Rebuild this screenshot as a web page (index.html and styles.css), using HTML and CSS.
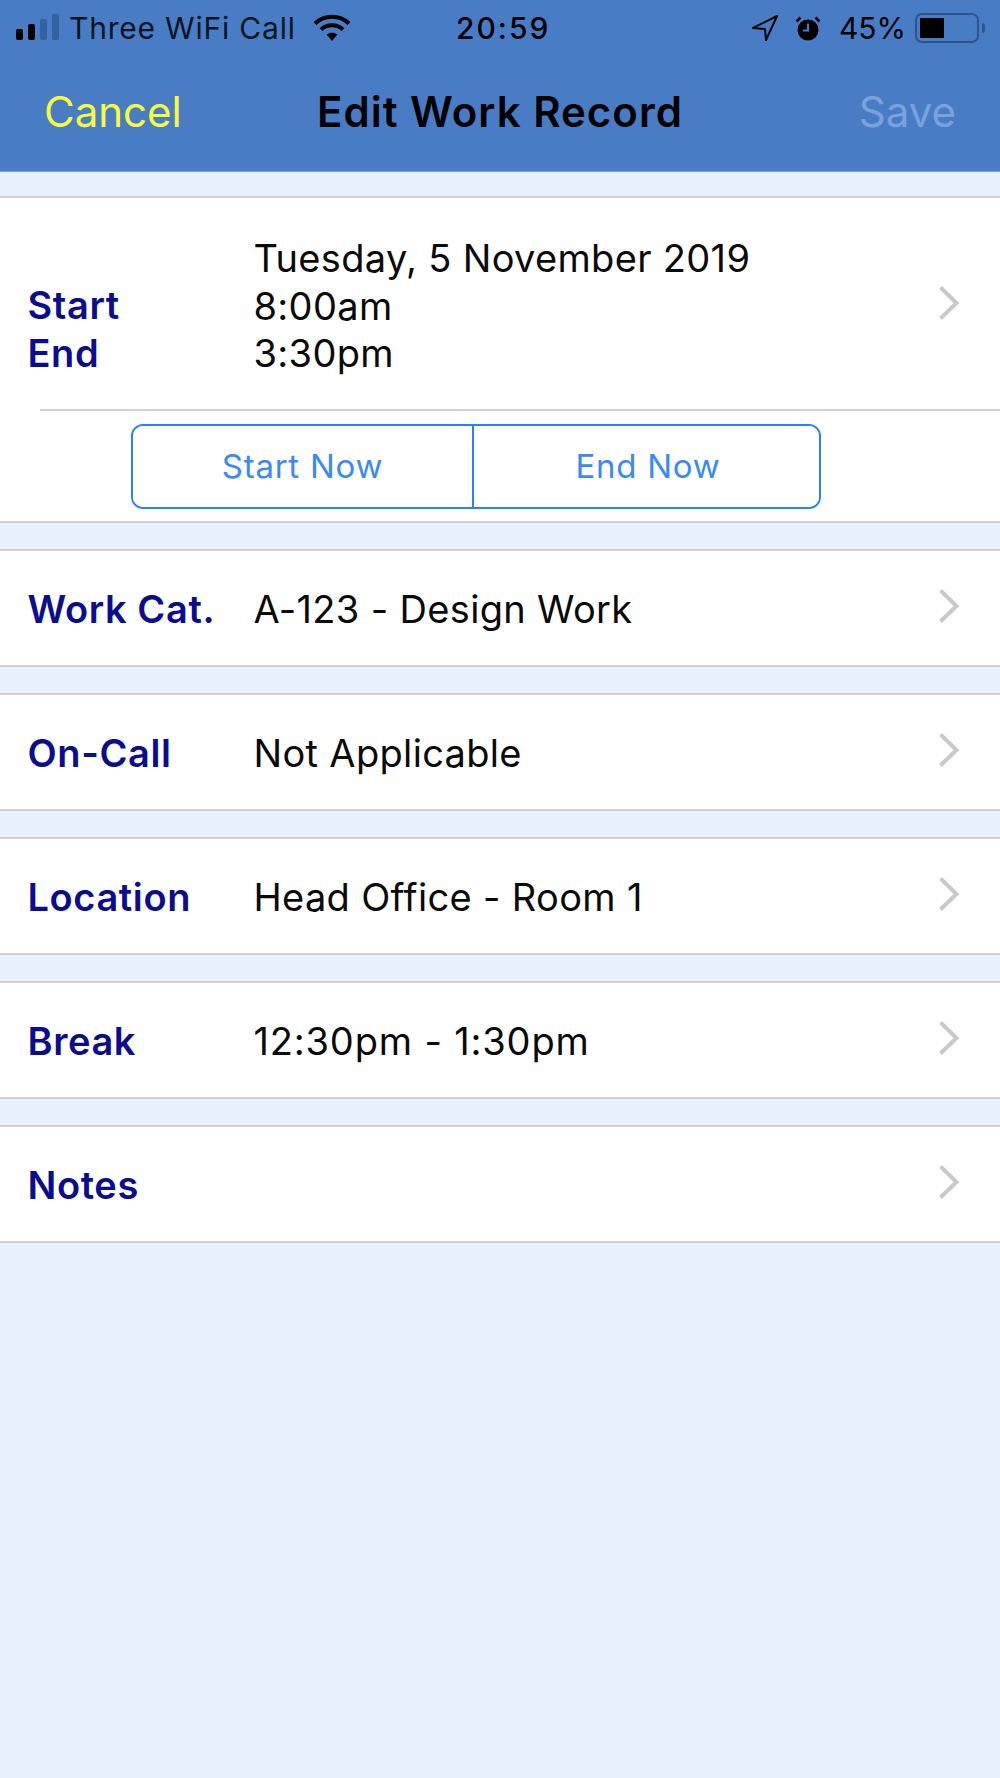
FILE: index.html
```html
<!DOCTYPE html>
<html lang="en">
<head>
<meta charset="utf-8">
<title>Edit Work Record</title>
<link rel="stylesheet" href="styles.css">
</head>
<body>
<header class="topbar">
  <div class="status">
    <div class="status-left">
      <svg class="signal" width="46" height="28" viewBox="0 0 46 28"><rect x="0" y="15" width="7" height="11" rx="2" fill="#000"/><rect x="12" y="10" width="7" height="16" rx="2" fill="#000"/><rect x="24" y="5" width="7" height="21" rx="2" fill="#34619f"/><rect x="36" y="0" width="7" height="26" rx="2" fill="#34619f"/></svg>
      <span class="carrier">Three WiFi Call</span>
      <svg class="wifi" width="38" height="28" viewBox="0 0 38 28"><path d="M19 27 13.600 20.600C16.900 18 21.100 18 24.400 20.600Z" fill="#000"/><path d="M2 9.500C11.500 .5 26.500 .5 36 9.500" fill="none" stroke="#000" stroke-width="4"/><path d="M8 15.500C14 9.800 24 9.800 30 15.500" fill="none" stroke="#000" stroke-width="4"/></svg>
    </div>
    <div class="clock">20:59</div>
    <div class="status-right">
      <svg class="loc" width="26" height="26" viewBox="0 0 26 26"><path d="M25 1 1 13 13 14 14 25Z" fill="none" stroke="#000" stroke-width="2" stroke-linejoin="round"/></svg>
      <svg class="alarm" width="26" height="25" viewBox="0 0 26 25"><circle cx="13" cy="14" r="10.500" fill="#000"/><path d="M13 7.500v7H8" fill="none" stroke="#487dc6" stroke-width="2.200"/><path d="M1.500 5.500 5.500 1.500M24.500 5.500 20.500 1.500" stroke="#000" stroke-width="2.500"/></svg>
      <span class="pct">45%</span>
      <div class="battery"><div class="battery-fill"></div></div>
      <div class="battery-tip"></div>
    </div>
  </div>
  <nav class="navbar">
    <span class="cancel">Cancel</span>
    <span class="title">Edit Work Record</span>
    <span class="save">Save</span>
  </nav>
</header>

<main class="form">
  <section class="group">
    <div class="row row-time">
      <div class="labels"><div class="label">Start</div><div class="label">End</div></div>
      <div class="values"><div>Tuesday, 5 November 2019</div><div>8:00am</div><div>3:30pm</div></div>
      <svg class="chev" width="22" height="36" viewBox="0 0 22 36"><path d="M2.500 2.500 18.500 18 2.500 33.500" fill="none" stroke="#c8c8cd" stroke-width="4"/></svg>
    </div>
    <div class="buttons-row">
      <div class="segment">
        <button class="seg-btn seg-start">Start Now</button>
        <button class="seg-btn seg-end">End Now</button>
      </div>
    </div>
  </section>

  <section class="group">
    <div class="row"><div class="label">Work Cat.</div><div class="value">A-123 - Design Work</div>
      <svg class="chev" width="22" height="36" viewBox="0 0 22 36"><path d="M2.500 2.500 18.500 18 2.500 33.500" fill="none" stroke="#c8c8cd" stroke-width="4"/></svg></div>
  </section>
  <section class="group">
    <div class="row"><div class="label">On-Call</div><div class="value">Not Applicable</div>
      <svg class="chev" width="22" height="36" viewBox="0 0 22 36"><path d="M2.500 2.500 18.500 18 2.500 33.500" fill="none" stroke="#c8c8cd" stroke-width="4"/></svg></div>
  </section>
  <section class="group">
    <div class="row"><div class="label">Location</div><div class="value">Head Office - Room 1</div>
      <svg class="chev" width="22" height="36" viewBox="0 0 22 36"><path d="M2.500 2.500 18.500 18 2.500 33.500" fill="none" stroke="#c8c8cd" stroke-width="4"/></svg></div>
  </section>
  <section class="group">
    <div class="row"><div class="label">Break</div><div class="value value-time">12:30pm - 1:30pm</div>
      <svg class="chev" width="22" height="36" viewBox="0 0 22 36"><path d="M2.500 2.500 18.500 18 2.500 33.500" fill="none" stroke="#c8c8cd" stroke-width="4"/></svg></div>
  </section>
  <section class="group">
    <div class="row"><div class="label">Notes</div><div class="value"></div>
      <svg class="chev" width="22" height="36" viewBox="0 0 22 36"><path d="M2.500 2.500 18.500 18 2.500 33.500" fill="none" stroke="#c8c8cd" stroke-width="4"/></svg></div>
  </section>
</main>
</body>
</html>
```

FILE: styles.css
```css
* { box-sizing: border-box; }
html, body { margin: 0; padding: 0; }
body {
  width: 1000px;
  height: 1778px;
  background: #e7f1fe;
  font-family: Inter, "Liberation Sans", sans-serif;
  color: #000;
  overflow: hidden;
}
.topbar {
  height: 172px;
  background: #487dc6;
  border-bottom: 1px solid #7f9fce;
}
.status {
  height: 56px;
  position: relative;
  display: flex;
  align-items: center;
  justify-content: space-between;
  padding: 0 15px 0 16px;
  font-size: 30px;
}
.status-left, .status-right { display: flex; align-items: center; }
.carrier { margin-left: 7px; color: #0a1420; letter-spacing: .8px; }
.wifi { margin-left: 17px; }
.clock {
  position: absolute;
  left: 456px;
  top: 9px;
  font-weight: 500;
  font-size: 30px;
  letter-spacing: 2px;
  line-height: 38px;
}
.alarm { margin-left: 17px; }
.pct { margin-left: 18px; }
.battery {
  width: 64px;
  height: 30px;
  margin-left: 9px;
  border: 2px solid #2f5587;
  border-radius: 7px;
  padding: 3px;
}
.battery-fill { width: 24px; height: 100%; background: #000; }
.battery-tip {
  width: 3px;
  height: 10px;
  margin-left: 3px;
  background: #2f5587;
  border-radius: 0 3px 3px 0;
}
.navbar {
  height: 115px;
  display: flex;
  align-items: center;
  justify-content: space-between;
  padding: 0 44px 4px;
  position: relative;
  font-size: 42px;
}
.cancel { color: #f8fb3c; }
.save { color: #7aa2d8; }
.title {
  font-weight: 600;
  letter-spacing: 1px;
  position: absolute;
  left: 317px;
  top: 29px;
  line-height: 54px;
}
.form { padding-top: 24px; display: flex; flex-direction: column; gap: 26px; }
.group {
  background: #fff;
  border-top: 2px solid #d0d1d5;
  border-bottom: 2px solid #d0d1d5;
}
.row {
  height: 114px;
  display: flex;
  align-items: center;
  position: relative;
  padding: 2px 0 0 28px;
  font-size: 38px;
}
.label { width: 226px; font-weight: 600; color: #0c0c92; letter-spacing: .6px; margin-left: -.5px; }
.value { flex: 1; color: #0a0a0a; letter-spacing: .33px; }
.value-time { letter-spacing: .83px; }
.chev { position: absolute; right: 40px; top: 37px; }
.row-time {
  height: 213px;
  align-items: flex-start;
  padding-top: 0;
}
.row-time::after {
  content: "";
  position: absolute;
  left: 40px;
  right: 0;
  bottom: 0;
  height: 2px;
  background: #d2d2d4;
}
.row-time .chev { top: 87px; }
.labels { padding-top: 84px; line-height: 47.5px; }
.values { padding-top: 37px; line-height: 47.5px; color: #0a0a0a; letter-spacing: .33px; }
.buttons-row { height: 110px; display: flex; padding: 13px 0 0 131px; }
.segment {
  width: 690px;
  height: 85px;
  display: flex;
  border: 2px solid #2b82f8;
  border-radius: 12px;
  overflow: hidden;
}
.seg-btn {
  background: #fff;
  border: 0;
  padding: 0 0 2px;
  color: #3a8af5;
  font-family: inherit;
  font-size: 33px;
  letter-spacing: .75px;
  flex: 1;
}
.seg-start { border-right: 2px solid #2b82f8; flex: 0 0 341px; }
.seg-end { padding-left: 3px; }
```
